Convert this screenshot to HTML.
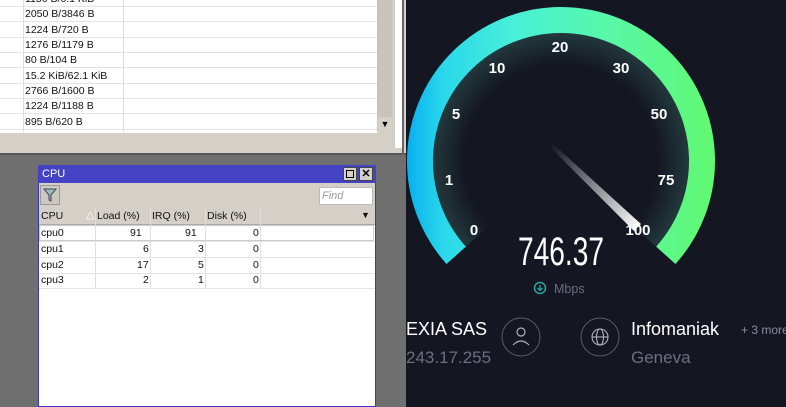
<!DOCTYPE html>
<html><head><style>
body{margin:0;width:786px;height:407px;overflow:hidden;position:relative;background:#6f6f6f;font-family:"Liberation Sans",sans-serif}
div{position:absolute;box-sizing:border-box}
.r{left:0;width:378px;height:15.3px;border-bottom:1px solid #e4e4e4;font-size:10.5px;color:#111;background:#fff}
.r span{position:absolute;left:25px;top:1px}
.t{font-size:10.5px;color:#111}
</style></head><body>
<div style="left:0;top:0;width:406px;height:155px;background:#d4d0c8"></div>
<div style="left:0;top:0;width:378px;height:133px;background:#fff"></div>
<div class="r" style="top:-8px"><span>1150 B/6.1 KiB</span></div>
<div class="r" style="top:7px"><span>2050 B/3846 B</span></div>
<div class="r" style="top:22.5px"><span>1224 B/720 B</span></div>
<div class="r" style="top:38px"><span>1276 B/1179 B</span></div>
<div class="r" style="top:53px"><span>80 B/104 B</span></div>
<div class="r" style="top:68.5px"><span>15.2 KiB/62.1 KiB</span></div>
<div class="r" style="top:84px"><span>2766 B/1600 B</span></div>
<div class="r" style="top:99px"><span>1224 B/1188 B</span></div>
<div class="r" style="top:114.5px"><span>895 B/620 B</span></div>
<div style="left:23px;top:0;width:1px;height:132px;background:#ddd"></div>
<div style="left:123px;top:0;width:1px;height:132px;background:#ddd"></div>
<div style="left:377px;top:0;width:15px;height:132px;background:#c8c4bc"></div>
<div style="left:378px;top:117px;width:14px;height:15px;background:#d4d0c8;font-size:9px;text-align:center;line-height:15px">&#9660;</div>
<div style="left:395px;top:0;width:7px;height:148px;background:#fff"></div>
<div style="left:0;top:153px;width:406px;height:2px;background:#555"></div>
<div style="left:402px;top:0;width:2px;height:155px;background:#666"></div>
<div style="left:38px;top:165px;width:338px;height:242px;background:#fff;border:1px solid #3838b8"></div>
<div style="left:38px;top:165px;width:338px;height:18px;background:#4343c4;color:#fff;font-size:11px;padding:3px 4px">CPU</div>
<div style="left:343px;top:167px;width:14px;height:14px;background:#d4d0c8;border:1px solid #444"><div style="left:2px;top:2px;width:8px;height:8px;border:1px solid #000"></div></div>
<div style="left:359px;top:167px;width:14px;height:14px;background:#d4d0c8;border:1px solid #444;font-size:11px;font-weight:bold;text-align:center;line-height:12px">✕</div>
<div style="left:39px;top:183px;width:336px;height:24px;background:#d4d0c8"></div>
<div style="left:40px;top:185px;width:20px;height:20px;border:1px solid #999;background:#ccc8c0"><svg width="18" height="18" style="position:absolute;left:0;top:0"><path d="M3 3h12l-5 6v6l-2-1v-5z" fill="#9bb" stroke="#446" stroke-width="1"/></svg></div>
<div style="left:319px;top:187px;width:54px;height:18px;background:#fff;border:1px solid #bbb;font-size:11px;font-style:italic;color:#999;padding:2px 2px">Find</div>
<div style="left:39px;top:207px;width:336px;height:18px;background:#d4d0c8;border-bottom:1px solid #aaa"></div>
<div class="t" style="left:41px;top:210px">CPU</div>
<div class="t" style="left:86px;top:209px;color:#fff">△</div>
<div class="t" style="left:97px;top:210px">Load (%)</div>
<div class="t" style="left:152px;top:210px">IRQ (%)</div>
<div class="t" style="left:207px;top:210px">Disk (%)</div>
<div class="t" style="left:361px;top:210px;font-size:9px">▼</div>
<div style="left:95px;top:207px;width:1px;height:82px;background:#e0e0e0"></div>
<div style="left:150px;top:207px;width:1px;height:82px;background:#e0e0e0"></div>
<div style="left:205px;top:207px;width:1px;height:82px;background:#e0e0e0"></div>
<div style="left:260px;top:207px;width:1px;height:82px;background:#e0e0e0"></div>
<div style="left:39px;top:225px;width:335px;height:16px;border:1px solid #ccc"></div>
<div style="left:39px;top:241px;width:336px;height:1px;background:#e4e4e4"></div>
<div style="left:39px;top:257px;width:336px;height:1px;background:#e4e4e4"></div>
<div style="left:39px;top:273px;width:336px;height:1px;background:#e4e4e4"></div>
<div style="left:39px;top:288px;width:336px;height:1px;background:#e4e4e4"></div>
<div class="t" style="left:41px;top:227px">cpu0</div><div class="t" style="left:130px;top:227px">91</div><div class="t" style="left:185px;top:227px">91</div><div class="t" style="left:253px;top:227px">0</div>
<div class="t" style="left:41px;top:243px">cpu1</div><div class="t" style="left:143px;top:243px">6</div><div class="t" style="left:198px;top:243px">3</div><div class="t" style="left:253px;top:243px">0</div>
<div class="t" style="left:41px;top:259px">cpu2</div><div class="t" style="left:137px;top:259px">17</div><div class="t" style="left:198px;top:259px">5</div><div class="t" style="left:253px;top:259px">0</div>
<div class="t" style="left:41px;top:274px">cpu3</div><div class="t" style="left:143px;top:274px">2</div><div class="t" style="left:198px;top:274px">1</div><div class="t" style="left:253px;top:274px">0</div>
<div style="left:406px;top:0;width:380px;height:407px;background:#141622"></div>
<svg width="786" height="407" style="position:absolute;left:0;top:0">
<defs>
<linearGradient id="g" x1="407" y1="0" x2="715" y2="0" gradientUnits="userSpaceOnUse"><stop offset="0" stop-color="#08b0f0"/><stop offset="0.12" stop-color="#2ad8ea"/><stop offset="0.35" stop-color="#48f0d8"/><stop offset="0.65" stop-color="#58f8a8"/><stop offset="1" stop-color="#60f870"/></linearGradient>
<radialGradient id="rg" cx="561" cy="161" r="128" gradientUnits="userSpaceOnUse"><stop offset="0.75" stop-color="#141622"/><stop offset="1" stop-color="#22383c"/></radialGradient>
<linearGradient id="nd" x1="548" y1="148" x2="640" y2="228" gradientUnits="userSpaceOnUse"><stop offset="0" stop-color="#141622"/><stop offset="1" stop-color="#ffffff"/></linearGradient>
</defs>
<path d="M465.9 246.6 A128 128 0 1 1 656.1 246.6 L 561 161 Z" fill="url(#rg)"/>
<path d="M456.2 255.3 A141 141 0 1 1 665.8 255.3" fill="none" stroke="url(#g)" stroke-width="26"/>
<path d="M549 146 L552 143 L641 224 L634 231 Z" fill="url(#nd)"/>
<g fill="#fff" font-weight="bold" font-size="15" font-family="Liberation Sans" text-anchor="middle">
<text x="474" y="235">0</text><text x="449" y="185">1</text><text x="456" y="119">5</text>
<text x="497" y="73">10</text><text x="560" y="52">20</text><text x="621" y="73">30</text>
<text x="659" y="119">50</text><text x="666" y="185">75</text><text x="638" y="235">100</text>
</g>
<text x="561" y="265" fill="#fff" font-size="40" font-family="Liberation Sans Narrow,Liberation Sans" text-anchor="middle" textLength="86" lengthAdjust="spacingAndGlyphs">746.37</text>
<circle cx="540" cy="288" r="5.5" fill="none" stroke="#2aa8a0" stroke-width="1.5"/>
<path d="M540 285v5M537.5 288l2.5 2.5 2.5-2.5" stroke="#2aa8a0" fill="none" stroke-width="1.3"/>
<text x="554" y="293" fill="#6c6e80" font-size="12.5" font-family="Liberation Sans">Mbps</text>
<text x="406" y="335" fill="#fff" font-size="18" font-family="Liberation Sans">EXIA SAS</text>
<text x="406" y="363" fill="#6c6e80" font-size="17" font-family="Liberation Sans">243.17.255</text>
<circle cx="521" cy="337" r="19" fill="none" stroke="#5a5c6c" stroke-width="1"/>
<circle cx="521" cy="332" r="4" fill="none" stroke="#b0b2c0" stroke-width="1.2"/>
<path d="M513 345q8-8 16 0" fill="none" stroke="#b0b2c0" stroke-width="1.2"/>
<circle cx="600" cy="337" r="19" fill="none" stroke="#5a5c6c" stroke-width="1"/>
<g fill="none" stroke="#b0b2c0" stroke-width="1.1"><circle cx="600" cy="337" r="8"/><ellipse cx="600" cy="337" rx="3.5" ry="8"/><path d="M592 337h16"/></g>
<text x="631" y="335" fill="#fff" font-size="18" font-family="Liberation Sans">Infomaniak</text>
<text x="741" y="334" fill="#8a8c9c" font-size="12" font-family="Liberation Sans">+ 3 more</text>
<text x="631" y="363" fill="#6c6e80" font-size="17" font-family="Liberation Sans">Geneva</text>
</svg>
</body></html>
